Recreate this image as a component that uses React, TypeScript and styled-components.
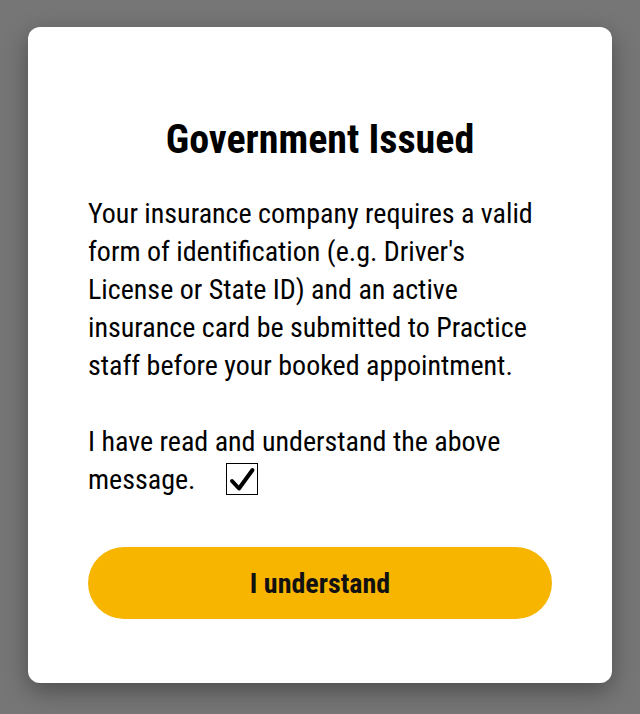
import React, { useState } from 'react';
import styled, { createGlobalStyle } from 'styled-components';

const GlobalStyle = createGlobalStyle`
  html, body {
    margin: 0;
    padding: 0;
    height: 100%;
  }
  body {
    font-family: "Roboto Condensed", "Roboto", "Liberation Sans Narrow", sans-serif;
  }
`;

export default function App() {
  const [checked, setChecked] = useState(true);

  return (
    <>
      <GlobalStyle />
      <Backdrop>
        <Dialog>
          <Title>Government Issued</Title>
          <Message>
            Your insurance company requires a valid form of identification (e.g. Driver's
            License or State ID) and an active insurance card be submitted to Practice staff
            before your booked appointment.
          </Message>
          <Confirm>
            I have read and understand the above message.
            <CheckBox type="button" onClick={() => setChecked(!checked)} aria-pressed={checked}>
              {checked && (
                <svg width="30" height="30" viewBox="0 0 30 30">
                  <path d="M5 17 L12 24.5 L25.5 6" fill="none" stroke="#000" strokeWidth="4" strokeLinecap="round" strokeLinejoin="round" />
                </svg>
              )}
            </CheckBox>
          </Confirm>
          <PrimaryButton>I understand</PrimaryButton>
        </Dialog>
      </Backdrop>
    </>
  );
}

const Backdrop = styled.div`
  min-height: 714px;
  box-sizing: border-box;
  background: #767676;
  padding: 27px 28px 31px;
`;

const Dialog = styled.div`
  background: #fff;
  border-radius: 12px;
  box-shadow: 0 8px 24px rgba(0, 0, 0, 0.35);
  padding: 91px 60px 64px;
  display: flex;
  flex-direction: column;
  color: #000;
`;

const Title = styled.h2`
  margin: 0 0 33px;
  text-align: center;
  font-size: 40px;
  font-weight: 700;
  line-height: 44px;
`;

const Message = styled.p`
  margin: 0 0 38px;
  font-size: 28px;
  line-height: 38px;
`;

const Confirm = styled.div`
  font-size: 28px;
  line-height: 38px;
  margin-bottom: 48px;
`;

const CheckBox = styled.button`
  display: inline-flex;
  align-items: center;
  justify-content: center;
  width: 32px;
  height: 32px;
  margin-left: 31px;
  padding: 0;
  border: 1px solid #000;
  background: #fff;
  vertical-align: -5px;
  cursor: pointer;
`;

const PrimaryButton = styled.button`
  height: 72px;
  border: none;
  border-radius: 36px;
  background: #f7b500;
  color: #111;
  font-family: inherit;
  font-size: 28px;
  font-weight: 700;
  cursor: pointer;
`;
